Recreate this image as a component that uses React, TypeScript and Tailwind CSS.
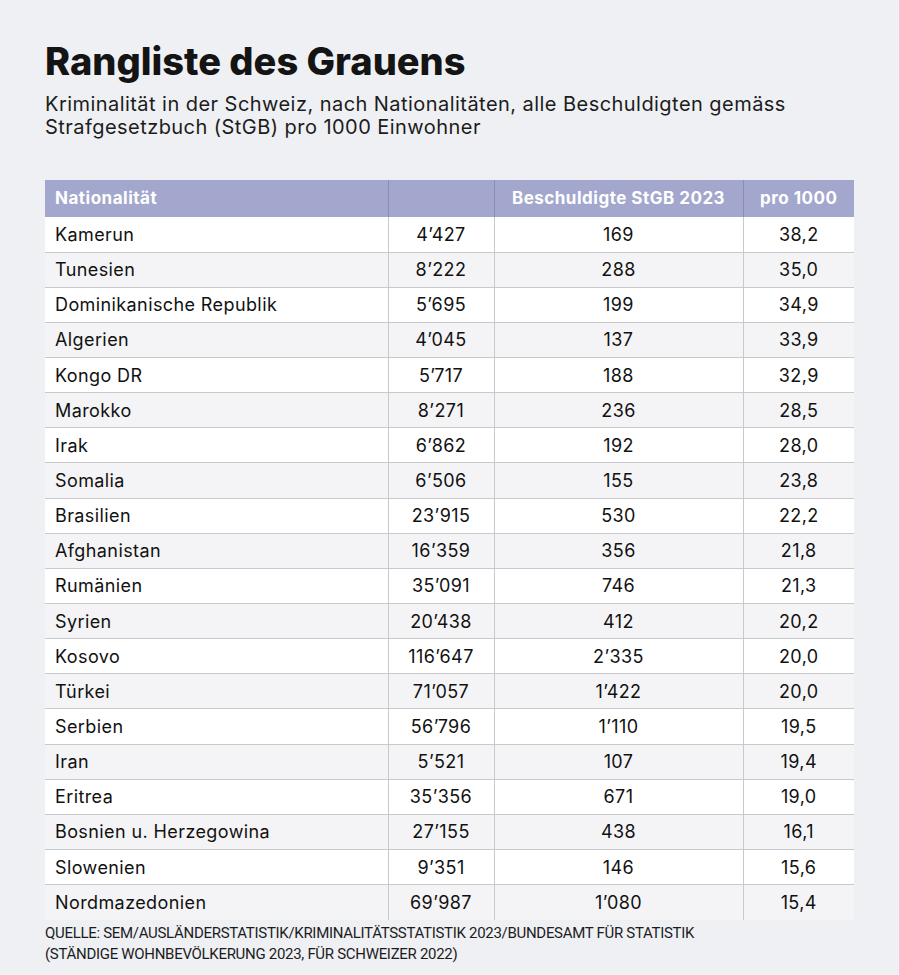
import React from 'react';

const rows: [string, string, string, string][] = [
  ["Kamerun", "4’427", "169", "38,2"],
  ["Tunesien", "8’222", "288", "35,0"],
  ["Dominikanische Republik", "5’695", "199", "34,9"],
  ["Algerien", "4’045", "137", "33,9"],
  ["Kongo DR", "5’717", "188", "32,9"],
  ["Marokko", "8’271", "236", "28,5"],
  ["Irak", "6’862", "192", "28,0"],
  ["Somalia", "6’506", "155", "23,8"],
  ["Brasilien", "23’915", "530", "22,2"],
  ["Afghanistan", "16’359", "356", "21,8"],
  ["Rumänien", "35’091", "746", "21,3"],
  ["Syrien", "20’438", "412", "20,2"],
  ["Kosovo", "116’647", "2’335", "20,0"],
  ["Türkei", "71’057", "1’422", "20,0"],
  ["Serbien", "56’796", "1’110", "19,5"],
  ["Iran", "5’521", "107", "19,4"],
  ["Eritrea", "35’356", "671", "19,0"],
  ["Bosnien u. Herzegowina", "27’155", "438", "16,1"],
  ["Slowenien", "9’351", "146", "15,6"],
  ["Nordmazedonien", "69’987", "1’080", "15,4"],
];

export default function App() {
  return (
    <div className="min-h-[975px] w-[899px] bg-[#eff0f4] text-[#111] font-['Inter','Noto_Sans',sans-serif]">
      <div className="pl-[45px] pr-[45px] pt-[38px]">
        <h1 className="text-[38px] leading-[46px] font-extrabold tracking-[0px] text-[#141414]">
          Rangliste des Grauens
        </h1>
        <p className="mt-[9px] text-[20px] leading-[23px] text-[#1c1c1c] tracking-[0.45px]">
          Kriminalität in der Schweiz, nach Nationalitäten, alle Beschuldigten gemäss
          <br />
          Strafgesetzbuch (StGB) pro 1000 Einwohner
        </p>

        <table className="mt-[41px] w-[809px] border-collapse text-[18px] tracking-[0.4px]">
          <thead>
            <tr className="h-[37px] bg-[#a3a7cd] text-white">
              <th className="w-[343px] text-left pl-[10px] font-bold text-[17px] tracking-[0.5px]">Nationalität</th>
              <th className="w-[106px] border-l border-[#8a8db5]"></th>
              <th className="w-[249px] border-l border-[#8a8db5] text-center font-bold text-[17px] tracking-[0.5px]">
                Beschuldigte StGB 2023
              </th>
              <th className="border-l border-[#8a8db5] text-center font-bold text-[17px] tracking-[0.5px]">pro 1000</th>
            </tr>
          </thead>
          <tbody>
            {rows.map(([name, pop, acc, rate], i) => (
              <tr
                key={name}
                className={
                  "h-[35.15px] " +
                  (i % 2 === 0 ? "bg-white" : "bg-[#f4f4f6]") +
                  (i < rows.length - 1 ? " border-b border-[#c9c9cc]" : "")
                }
              >
                <td className="pl-[10px] text-left">{name}</td>
                <td className="border-l border-[#c9c9cc] text-center">{pop}</td>
                <td className="border-l border-[#c9c9cc] text-center">{acc}</td>
                <td className="border-l border-[#c9c9cc] text-center">{rate}</td>
              </tr>
            ))}
          </tbody>
        </table>

        <p className="mt-[3px] text-[15px] leading-[21px] uppercase text-[#1c1c1c] font-['Roboto',sans-serif] tracking-[-0.3px]">
          Quelle: SEM/Ausländerstatistik/Kriminalitätsstatistik 2023/Bundesamt für Statistik
          <br />
          (Ständige Wohnbevölkerung 2023, für Schweizer 2022)
        </p>
      </div>
    </div>
  );
}
